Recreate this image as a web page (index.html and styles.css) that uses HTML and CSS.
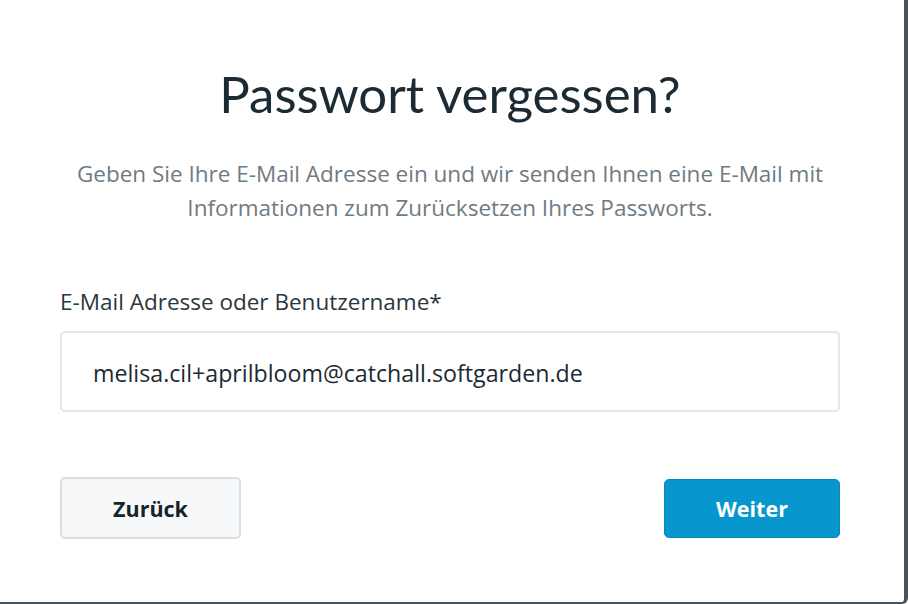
FILE: index.html
```html
<!DOCTYPE html>
<html lang="de">
<head>
<meta charset="utf-8">
<title>Passwort vergessen?</title>
<link rel="stylesheet" href="styles.css">
</head>
<body>
<div class="modal">
  <div class="content">
    <h1 class="title">Passwort vergessen?</h1>
    <p class="intro">Geben Sie Ihre E-Mail Adresse ein und wir senden Ihnen eine E-Mail mit Informationen zum Zurücksetzen Ihres Passworts.</p>
    <form class="form">
      <label class="label" for="email">E-Mail Adresse oder Benutzername*</label>
      <input class="input" id="email" type="text" value="melisa.cil+aprilbloom@catchall.softgarden.de">
      <div class="actions">
        <button type="button" class="btn btn-secondary">Zurück</button>
        <button type="submit" class="btn btn-primary">Weiter</button>
      </div>
    </form>
  </div>
</div>
</body>
</html>
```
FILE: styles.css
```css
* { box-sizing: border-box; }
html, body { margin: 0; padding: 0; background: #ffffff; }
body {
  width: 908px;
  height: 604px;
  overflow: hidden;
  font-family: "Open Sans", "Noto Sans", sans-serif;
}
.modal {
  width: 908px;
  height: 604px;
  background: #ffffff;
  border-right: 4px solid #4a5359;
  border-bottom: 2px solid #4a5359;
  border-bottom-right-radius: 6px;
}
.content {
  width: 780px;
  margin-left: 60px;
  padding-top: 64px;
  display: flex;
  flex-direction: column;
}
.title {
  margin: 0;
  font-family: Lato, sans-serif;
  font-weight: 400;
  font-size: 51px;
  line-height: 60px;
  color: #1c2a33;
  text-align: center;
}
.intro {
  margin: 33px auto 0;
  width: 780px;
  font-size: 22.5px;
  line-height: 34px;
  color: #6f7b82;
  text-align: center;
}
.form {
  display: flex;
  flex-direction: column;
  margin-top: 63px;
}
.label {
  font-size: 22.5px;
  line-height: 28px;
  color: #2a3740;
}
.input {
  margin-top: 15px;
  width: 780px;
  height: 81px;
  border: 2px solid #e3e7ea;
  border-radius: 5px;
  padding: 2px 0 0 31px;
  font-family: "Open Sans", "Noto Sans", sans-serif;
  font-size: 23.2px;
  color: #1c2a33;
  background: #ffffff;
  outline: none;
}
.actions {
  display: flex;
  justify-content: space-between;
  align-items: center;
  margin-top: 65px;
}
.btn {
  font-family: "Open Sans", "Noto Sans", sans-serif;
  font-weight: 700;
  font-size: 21.5px;
  border-radius: 5px;
  cursor: pointer;
}
.btn-secondary {
  width: 181px;
  height: 62px;
  background: #f7f8f9;
  border: 2px solid #d9dee2;
  color: #15232b;
}
.btn-primary {
  width: 176px;
  height: 59px;
  background: #0896cf;
  border: 1px solid #0a86ba;
  color: #ffffff;
}
```
